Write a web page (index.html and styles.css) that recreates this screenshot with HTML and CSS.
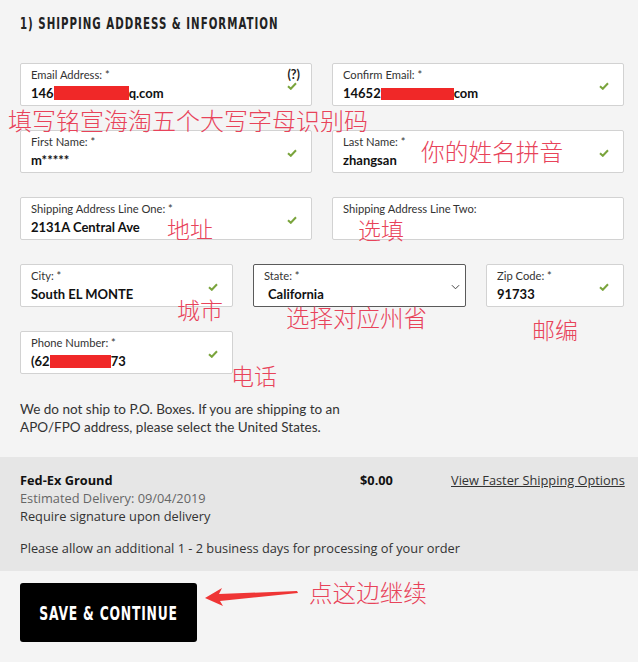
FILE: index.html
```html
<!DOCTYPE html>
<html lang="en">
<head>
<meta charset="utf-8">
<title>Shipping Address</title>
<link rel="stylesheet" href="styles.css">
</head>
<body>
<div class="page">
  <section class="form">
    <h2 class="title"><span class="narrow narrow-left">1) SHIPPING ADDRESS &amp; INFORMATION</span></h2>

    <div class="row row-2">
      <div class="field">
        <div class="label">Email Address: *</div>
        <div class="value">146<span class="redact r-email"></span>q.com</div>
        <span class="help">(?)</span>
        <svg class="check" viewBox="0 0 10 8"><path d="M1 4.2 L3.8 6.8 L9 1.2"/></svg>
      </div>
      <div class="field">
        <div class="label">Confirm Email: *</div>
        <div class="value">14652<span class="redact r-confirm"></span>com</div>
        <svg class="check" viewBox="0 0 10 8"><path d="M1 4.2 L3.8 6.8 L9 1.2"/></svg>
      </div>
    </div>

    <div class="row row-2">
      <div class="field">
        <div class="label">First Name: *</div>
        <div class="value">m*****</div>
        <svg class="check" viewBox="0 0 10 8"><path d="M1 4.2 L3.8 6.8 L9 1.2"/></svg>
      </div>
      <div class="field">
        <div class="label">Last Name: *</div>
        <div class="value">zhangsan</div>
        <svg class="check" viewBox="0 0 10 8"><path d="M1 4.2 L3.8 6.8 L9 1.2"/></svg>
      </div>
    </div>

    <div class="row row-2">
      <div class="field">
        <div class="label">Shipping Address Line One: *</div>
        <div class="value">2131A Central Ave</div>
        <svg class="check" viewBox="0 0 10 8"><path d="M1 4.2 L3.8 6.8 L9 1.2"/></svg>
      </div>
      <div class="field">
        <div class="label">Shipping Address Line Two:</div>
        <div class="value"></div>
      </div>
    </div>

    <div class="row row-3">
      <div class="field">
        <div class="label">City: *</div>
        <div class="value">South EL MONTE</div>
        <svg class="check" viewBox="0 0 10 8"><path d="M1 4.2 L3.8 6.8 L9 1.2"/></svg>
      </div>
      <div class="field field-select">
        <div class="label">State: *</div>
        <div class="value">California</div>
        <svg class="chevron" viewBox="0 0 10 6"><path d="M1 1 L5 5 L9 1"/></svg>
      </div>
      <div class="field">
        <div class="label">Zip Code: *</div>
        <div class="value">91733</div>
        <svg class="check" viewBox="0 0 10 8"><path d="M1 4.2 L3.8 6.8 L9 1.2"/></svg>
      </div>
    </div>

    <div class="row row-3">
      <div class="field">
        <div class="label">Phone Number: *</div>
        <div class="value">(62<span class="redact r-phone"></span>73</div>
        <svg class="check" viewBox="0 0 10 8"><path d="M1 4.2 L3.8 6.8 L9 1.2"/></svg>
      </div>
    </div>

    <p class="note">We do not ship to P.O. Boxes. If you are shipping to an<br>APO/FPO address, please select the United States.</p>
  </section>

  <section class="shipping">
    <div class="ship-top">
      <div class="ship-info">
        <div class="ship-name">Fed-Ex Ground</div>
        <div class="ship-est">Estimated Delivery: 09/04/2019</div>
        <div class="ship-sig">Require signature upon delivery</div>
      </div>
      <div class="ship-price">$0.00</div>
      <a class="ship-link" href="#">View Faster Shipping Options</a>
    </div>
    <p class="ship-note">Please allow an additional 1 - 2 business days for processing of your order</p>
  </section>

  <section class="actions">
    <button class="btn" type="button"><span class="narrow">SAVE &amp; CONTINUE</span></button>
  </section>

  <span class="anno a-code">填写铭宣海淘五个大写字母识别码</span>
  <span class="anno a-name">你的姓名拼音</span>
  <span class="anno a-addr">地址</span>
  <span class="anno a-opt">选填</span>
  <span class="anno a-city">城市</span>
  <span class="anno a-state">选择对应州省</span>
  <span class="anno a-zip">邮编</span>
  <span class="anno a-phone">电话</span>
  <span class="anno a-next">点这边继续</span>
  <svg class="arrow" viewBox="0 0 95 20"><polygon points="0,12 17,2 14,8 92,5 93,7 15,15 18,20"/></svg>
</div>
</body>
</html>
```

FILE: styles.css
```css
* { box-sizing: border-box; }

html, body {
  margin: 0;
  padding: 0;
  background: #f4f4f4;
}

.page {
  position: relative;
  width: 638px;
  height: 662px;
  overflow: hidden;
  font-family: "Open Sans", "Noto Sans", sans-serif;
  color: #222;
}

.form {
  padding: 12px 14px 0 20px;
}

.narrow {
  display: inline-block;
  white-space: nowrap;
  font-family: "DejaVu Sans", "Liberation Sans", sans-serif;
  font-weight: bold;
}

.narrow-left {
  transform: scaleX(0.62);
  transform-origin: 0 50%;
}

.title {
  margin: 0 0 28px 0;
  font-size: 16.5px;
  line-height: 22px;
  letter-spacing: 1.6px;
  color: #222;
  white-space: nowrap;
}

.row {
  display: grid;
  column-gap: 20px;
  margin-bottom: 24px;
}

.row-2 { grid-template-columns: 292px 292px; }
.row-3 { grid-template-columns: 213px 213px 138px; }

.field {
  position: relative;
  height: 43px;
  background: #fff;
  border: 1px solid #d2d2d2;
  border-radius: 2px;
  padding: 4px 10px 0 10px;
}

.label {
  font-family: "Lato", "Open Sans", sans-serif;
  font-size: 11.2px;
  line-height: 14px;
  color: #333;
}

.value {
  margin-top: 3px;
  font-family: "Lato", "Open Sans", sans-serif;
  font-weight: bold;
  font-size: 13px;
  line-height: 16px;
  color: #111;
  white-space: nowrap;
}

.redact {
  display: inline-block;
  background: #f02828;
  vertical-align: -2px;
}
.r-email { width: 75px; height: 14px; }
.r-confirm { width: 73px; height: 12px; }
.r-phone { width: 61px; height: 13px; }

.check {
  position: absolute;
  right: 14px;
  top: 18px;
  width: 10px;
  height: 8px;
  fill: none;
  stroke: #7aa43c;
  stroke-width: 2;
}

.help {
  position: absolute;
  right: 11px;
  top: 3px;
  font-family: "Lato", "Open Sans", sans-serif;
  font-weight: bold;
  font-size: 12.5px;
  line-height: 16px;
  color: #222;
}

.field-select {
  border-color: #5a5a5a;
}
.field-select .value { padding-left: 4px; }

.chevron {
  position: absolute;
  right: 5px;
  top: 19px;
  width: 9px;
  height: 6px;
  fill: none;
  stroke: #444;
  stroke-width: 1.1;
}

.note {
  margin: 26px 0 0 0;
  font-family: "Lato", "Open Sans", sans-serif;
  font-size: 13.5px;
  line-height: 18px;
  color: #333;
}

.shipping {
  margin-top: 21px;
  background: #e6e6e6;
  padding: 14px 9px 14px 20px;
  font-size: 12.8px;
  line-height: 18px;
}

.ship-top {
  display: flex;
  align-items: flex-start;
}

.ship-info { width: 340px; }

.ship-name { font-weight: bold; color: #111; }
.ship-est { color: #666; }
.ship-sig { color: #333; }

.ship-price {
  width: 91px;
  font-weight: bold;
  color: #111;
}

.ship-link {
  color: #333;
  text-decoration: underline;
}

.ship-note {
  margin: 14px 0 0 0;
  color: #333;
}

.actions {
  padding: 12px 20px;
}

.btn {
  display: flex;
  align-items: center;
  justify-content: center;
  width: 177px;
  height: 59px;
  border: 0;
  border-radius: 3px;
  background: #000;
  color: #fff;
  font-size: 19px;
  letter-spacing: 1.2px;
  padding: 0;
  overflow: hidden;
}

.btn .narrow {
  transform: scaleX(0.65);
  transform-origin: 50% 50%;
}

.anno {
  position: absolute;
  font-family: "Noto Sans CJK SC", sans-serif;
  font-weight: 300;
  font-size: 24px;
  line-height: 18px;
  color: #e8435a;
  white-space: nowrap;
}
.a-code { left: 8px; top: 111px; }
.a-name { left: 421px; top: 142px; font-size: 23.7px; }
.a-addr { left: 167px; top: 219px; font-size: 23px; }
.a-opt { left: 358px; top: 220px; font-size: 23px; }
.a-city { left: 177px; top: 300px; font-size: 23px; }
.a-state { left: 286px; top: 308px; font-size: 23.5px; }
.a-zip { left: 532px; top: 320px; font-size: 23px; }
.a-phone { left: 231px; top: 366px; font-size: 23px; }
.a-next { left: 309px; top: 583px; font-size: 23.6px; }

.arrow {
  position: absolute;
  left: 205px;
  top: 586px;
  width: 95px;
  height: 20px;
  fill: #ef3535;
}
```
